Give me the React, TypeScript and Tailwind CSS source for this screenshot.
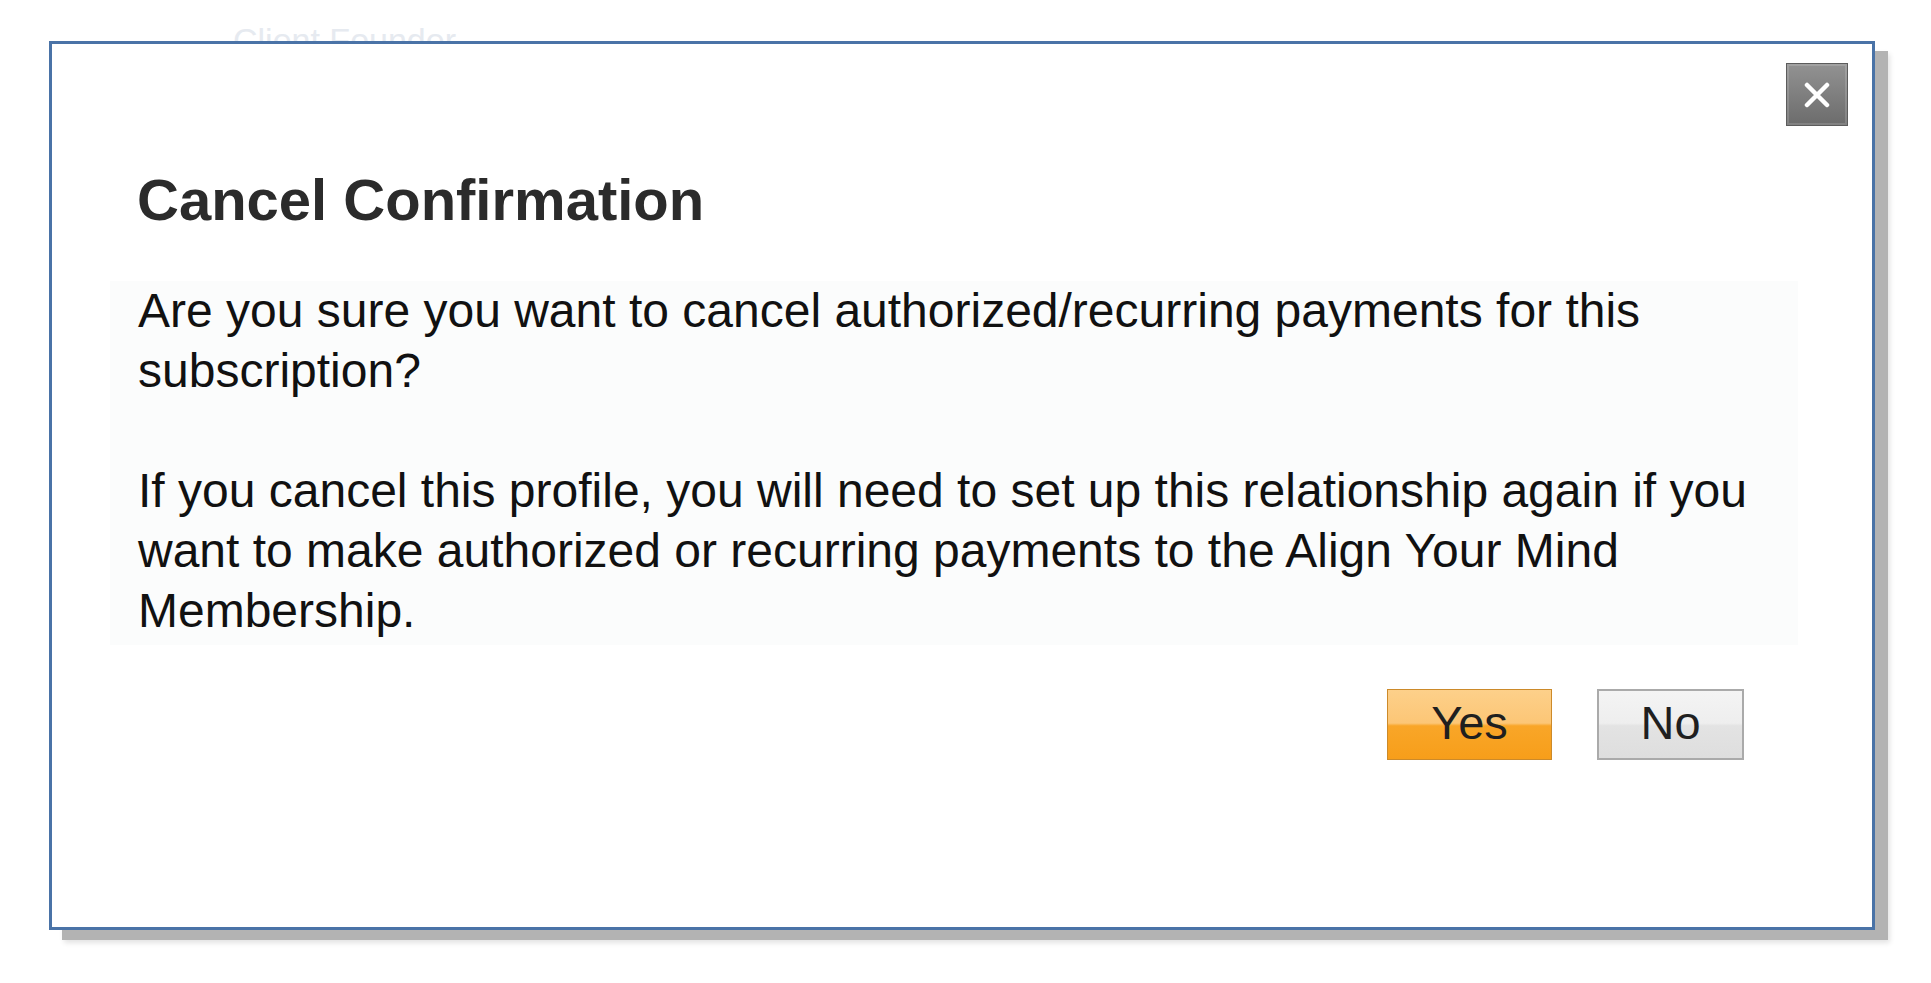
import React from 'react';

// 閉じるボタンの×アイコン
const CloseIcon = () => (
  <svg width="28" height="26" viewBox="0 0 28 26" fill="none">
    <path d="M4 3 L24 23 M24 3 L4 23" stroke="#ffffff" strokeWidth="4.5" strokeLinecap="round" />
  </svg>
);

const App: React.FC = () => {
  return (
    <div className="relative h-[983px] w-[1931px] overflow-hidden bg-white font-['Liberation_Sans',Arial,sans-serif]">
      {/* 背後のページ（ほぼ隠れている） */}
      <div className="pl-[233px] pt-[20px] text-[34px] leading-[40px] text-[#e6eaf0]">Client Founder</div>

      {/* キャンセル確認ダイアログ */}
      <div className="absolute left-[49px] top-[41px] flex h-[889px] w-[1826px] flex-col border-[3px] border-[#4a73a7] bg-white shadow-[13px_10px_0_0_#b3b3b3,15px_13px_5px_0_#e4e4e4]">
        <div className="flex justify-end pr-[24px] pt-[19px]">
          <button className="flex h-[63px] w-[62px] items-center justify-center border border-[#5c5c5c] bg-[linear-gradient(to_bottom,#929292,#6c6c6c)] shadow-[inset_0_0_0_2px_rgba(255,255,255,0.15)]">
            <CloseIcon />
          </button>
        </div>

        <h2 className="ml-[85px] mt-[45px] text-[58px] font-bold leading-[58px] text-[#2b2b2b]">Cancel Confirmation</h2>

        <div className="ml-[58px] mt-[52px] w-[1688px] bg-[#fbfcfc] pb-[4px] pl-[28px] pr-[20px] text-[48px] leading-[60px] text-[#111111]">
          <p>Are you sure you want to cancel authorized/recurring payments for this subscription?</p>
          <p className="mt-[60px]">
            If you cancel this profile, you will need to set up this relationship again if you want to make authorized or recurring payments to the Align Your Mind Membership.
          </p>
        </div>

        <div className="mr-[128px] mt-[44px] flex justify-end gap-[45px]">
          <button className="h-[71px] w-[165px] border border-[#cc8a2a] bg-[linear-gradient(to_bottom,#fdd08a_0%,#fcc676_48%,#f9a628_52%,#f79e1a_100%)] pb-[4px] text-[47px] leading-none text-[#1f1f1f]">
            Yes
          </button>
          <button className="h-[71px] w-[147px] border-2 border-[#aaaaaa] bg-[linear-gradient(to_bottom,#f4f4f4_0%,#eeeeee_48%,#e3e3e3_52%,#dedede_100%)] pb-[4px] text-[47px] leading-none text-[#1f1f1f]">
            No
          </button>
        </div>
      </div>
    </div>
  );
};

export default App;
